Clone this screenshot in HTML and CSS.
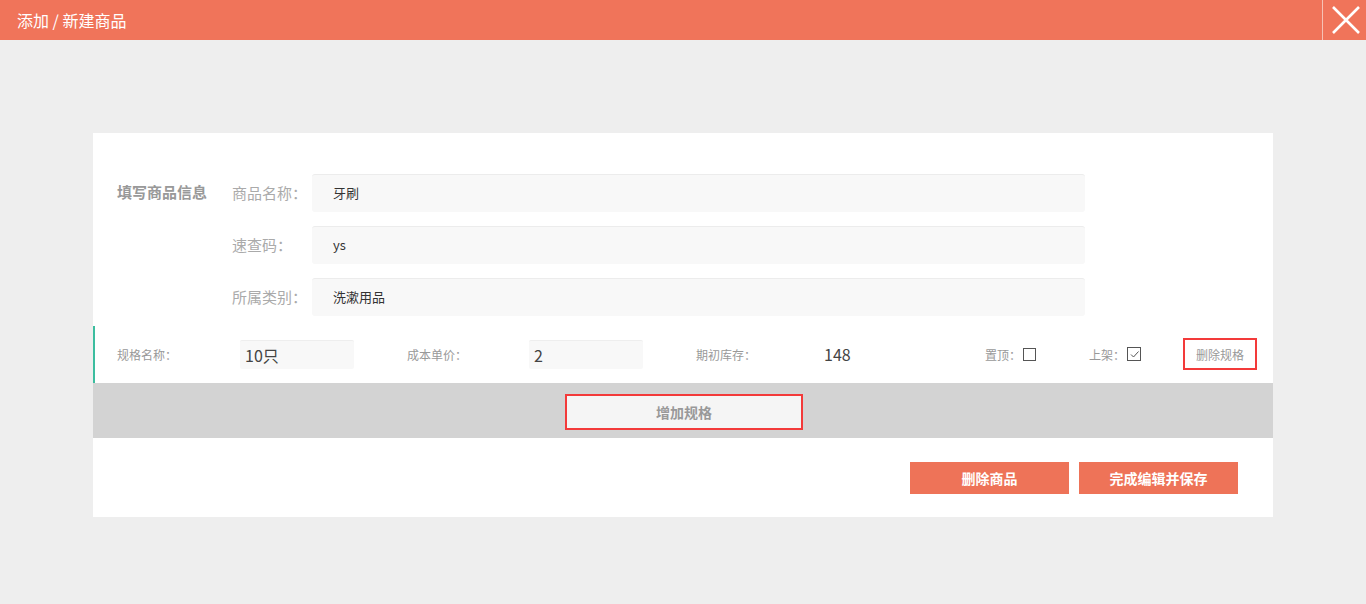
FILE: index.html
```html
<!DOCTYPE html>
<html lang="zh">
<head>
<meta charset="utf-8">
<title>添加 / 新建商品</title>
<link rel="stylesheet" href="styles.css">
</head>
<body>
<header class="topbar">
  <div class="title">添加 / 新建商品</div>
  <div class="close">
    <svg width="28" height="28" viewBox="0 0 28 28"><path d="M1 1 L27 27 M27 1 L1 27" stroke="#fff" stroke-width="2.6" fill="none"/></svg>
  </div>
</header>
<main class="stage">
  <section class="card">
    <div class="info">
      <div class="section-title">填写商品信息</div>
      <div class="fields">
        <div class="field"><label>商品名称：</label><div class="input">牙刷</div></div>
        <div class="field"><label>速查码：</label><div class="input">ys</div></div>
        <div class="field"><label>所属类别：</label><div class="input">洗漱用品</div></div>
      </div>
    </div>
    <div class="spec">
      <span class="s-label l1">规格名称：</span>
      <div class="s-input w1">10只</div>
      <span class="s-label l2">成本单价：</span>
      <div class="s-input w2">2</div>
      <span class="s-label l3">期初库存：</span>
      <span class="stock">148</span>
      <span class="s-label l4">置顶：</span>
      <span class="cb"></span>
      <span class="s-label l5">上架：</span>
      <span class="cb checked"><svg width="11" height="11" viewBox="0 0 11 11"><path d="M2 5.5 L4.5 8 L9.5 2.5" stroke="#555" stroke-width="1" fill="none"/></svg></span>
      <span class="del-spec">删除规格</span>
    </div>
    <div class="add-band">
      <button class="add-btn">增加规格</button>
    </div>
    <div class="actions">
      <button class="btn">删除商品</button>
      <button class="btn">完成编辑并保存</button>
    </div>
  </section>
</main>
</body>
</html>
```
FILE: styles.css
```css
* { box-sizing: border-box; }
html, body { margin: 0; padding: 0; }
body {
  width: 1366px;
  height: 604px;
  background: #eeeeee;
  font-family: "Microsoft YaHei", "Noto Sans CJK SC", "Liberation Sans", sans-serif;
  overflow: hidden;
}
.topbar {
  height: 40px;
  background: #f0745a;
  display: flex;
  align-items: center;
  justify-content: space-between;
}
.title {
  color: #fff;
  font-size: 16px;
  padding-left: 17px;
}
.close {
  width: 44px;
  height: 40px;
  border-left: 1px solid #f6c2b4;
  display: flex;
  align-items: center;
  justify-content: center;
  padding-left: 2px;
}
.stage {
  padding: 93px 93px 0 93px;
}
.card {
  background: #fff;
  width: 1180px;
  height: 384px;
  padding-top: 41px;
}
.info {
  display: flex;
}
.section-title {
  width: 139px;
  padding-left: 24px;
  font-size: 15px;
  font-weight: bold;
  color: #999;
  line-height: 36px;
}
.fields {
  display: flex;
  flex-direction: column;
  gap: 14px;
}
.field {
  display: flex;
  align-items: center;
}
.field label {
  width: 80px;
  font-size: 15px;
  color: #aaa;
  padding-bottom: 2px;
}
.input {
  width: 773px;
  height: 38px;
  background: #f8f8f8;
  border-top: 1px solid #ececec;
  border-radius: 3px;
  font-size: 13px;
  color: #333;
  padding-left: 21px;
  line-height: 35px;
}
.spec {
  margin-top: 10px;
  height: 57px;
  border-left: 2px solid #3cbd9f;
  display: flex;
  align-items: center;
  padding-bottom: 1px;
}
.s-label {
  font-size: 12px;
  color: #999;
  flex: none;
}
.l1 { margin-left: 22px; width: 123px; }
.l2 { margin-left: 53px; width: 122px; }
.l3 { margin-left: 53px; width: 128px; }
.l4 { margin-left: 128px; width: 38px; }
.l5 { margin-left: 53px; width: 38px; }
.s-input {
  width: 114px;
  height: 29px;
  background: #f8f8f8;
  border-top: 1px solid #eeeeee;
  border-radius: 2px;
  font-size: 16px;
  color: #444;
  padding-left: 5px;
  line-height: 28px;
  flex: none;
}
.stock {
  font-size: 16px;
  color: #444;
  width: 33px;
  flex: none;
}
.cb {
  width: 13px;
  height: 13px;
  border: 1px solid #555;
  flex: none;
  display: flex;
  align-items: center;
  justify-content: center;
}
.checked { width: 14px; height: 14px; }
.del-spec {
  margin-left: 42px;
  width: 74px;
  height: 32px;
  border: 2px solid #f33a3a;
  font-size: 12px;
  color: #999;
  display: flex;
  align-items: center;
  justify-content: center;
  flex: none;
}
.add-band {
  height: 55px;
  background: #d3d3d3;
  display: flex;
  justify-content: center;
  padding-top: 11px;
  padding-left: 2px;
}
.add-btn {
  width: 238px;
  height: 36px;
  background: #f5f5f5;
  border: 2px solid #f33a3a;
  font-family: inherit;
  font-size: 14px;
  font-weight: bold;
  color: #999;
  padding: 0;
}
.actions {
  display: flex;
  justify-content: flex-end;
  gap: 10px;
  padding: 24px 35px 0 0;
}
.btn {
  width: 159px;
  height: 32px;
  background: #ee7358;
  border: none;
  color: #fff;
  font-family: inherit;
  font-size: 14px;
  font-weight: bold;
  padding: 0;
}
```
